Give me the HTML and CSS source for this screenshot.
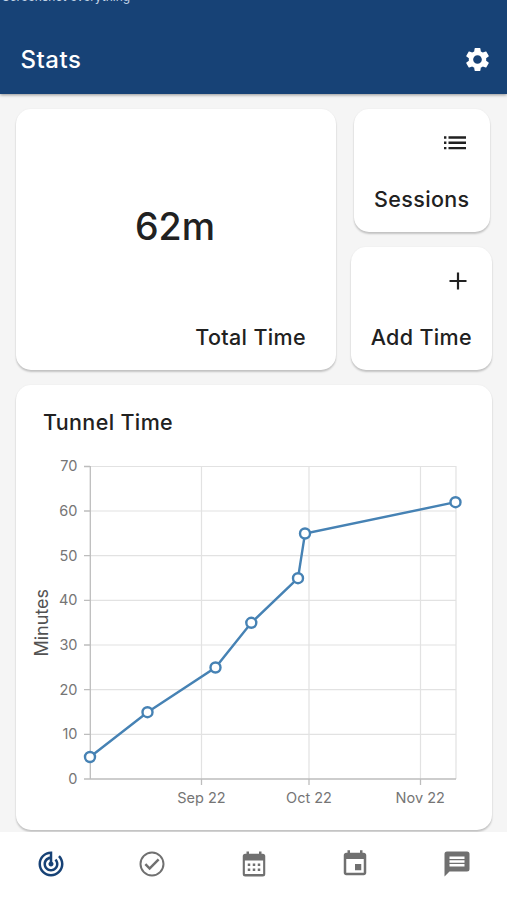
FILE: index.html
```html
<!DOCTYPE html>
<html lang="en">
<head>
<meta charset="utf-8">
<title>Stats</title>
<link rel="stylesheet" href="styles.css">
</head>
<body>
<div class="app">
  <header class="header">
    <div class="caption">Screenshot everything</div>
    <div class="toolbar">
      <h1 class="title">Stats</h1>
      <svg class="gear" viewBox="0 0 24 24"><path d="M19.14 12.94c.04-.3.06-.61.06-.94 0-.32-.02-.64-.07-.94l2.03-1.58c.18-.14.23-.41.12-.61l-1.92-3.32c-.12-.22-.37-.29-.59-.22l-2.39.96c-.5-.38-1.03-.7-1.62-.94l-.36-2.54c-.04-.24-.24-.41-.48-.41h-3.84c-.24 0-.43.17-.47.41l-.36 2.54c-.59.24-1.13.57-1.62.94l-2.39-.96c-.22-.08-.47 0-.59.22L2.74 8.87c-.12.21-.08.47.12.61l2.03 1.58c-.05.3-.09.63-.09.94s.02.64.07.94l-2.03 1.58c-.18.14-.23.41-.12.61l1.92 3.32c.12.22.37.29.59.22l2.39-.96c.5.38 1.03.7 1.62.94l.36 2.54c.05.24.24.41.48.41h3.84c.24 0 .44-.17.47-.41l.36-2.54c.59-.24 1.13-.56 1.62-.94l2.39.96c.22.08.47 0 .59-.22l1.92-3.32c.12-.22.07-.47-.12-.61l-2.01-1.58zM12 15.6c-1.98 0-3.6-1.62-3.6-3.6s1.62-3.6 3.6-3.6 3.6 1.62 3.6 3.6-1.62 3.6-3.6 3.6z"/></svg>
    </div>
  </header>
  <main class="content">
    <section class="summary">
      <div class="card total">
        <div class="value">62m</div>
        <div class="label">Total Time</div>
      </div>
      <div class="actions">
        <div class="card action sessions">
          <svg class="icon list" viewBox="0 0 24 24"><path d="M1 5.300h2.400v2.400H1zm0 5.300h2.400V13H1zm0 5.300h2.400v2.400H1zM5.500 5.300H23v2.400H5.500zm0 5.300H23V13H5.500zm0 5.300H23v2.400H5.500z"/></svg>
          <div class="label">Sessions</div>
        </div>
        <div class="card action add">
          <svg class="icon plus" viewBox="0 0 24 24"><path d="M10.900 3.500h2.200v7.400h7.400v2.200h-7.400v7.400h-2.200v-7.400H3.500v-2.200h7.400z"/></svg>
          <div class="label">Add Time</div>
        </div>
      </div>
    </section>
    <section class="card chart-card">
      <h2 class="chart-title">Tunnel Time</h2>
      <svg class="chart" viewBox="16 446 476 384">
        <path class="grid" d="M90 466.500H456M90 511H456M90 555.700H456M90 600.400H456M90 645H456M90 689.600H456M90 734.300H456M201.500 466V779M309 466V779M420.500 466V779M456 466V779"/>
        <path class="axis" d="M90.300 466V779M84 779H456M84 466.500H90M84 511H90M84 555.700H90M84 600.400H90M84 645H90M84 689.600H90M84 734.300H90M201.500 779V785M309 779V785M420.500 779V785"/>
        <g class="ylabels">
          <text x="77.500" y="471.300">70</text><text x="77.500" y="516">60</text><text x="77.500" y="560.600">50</text><text x="77.500" y="605.300">40</text><text x="77.500" y="650">30</text><text x="77.500" y="694.600">20</text><text x="77.500" y="739.300">10</text><text x="77.500" y="784">0</text>
        </g>
        <g class="xlabels">
          <text x="201.500" y="802.500">Sep 22</text><text x="309" y="802.500">Oct 22</text><text x="420.200" y="802.500">Nov 22</text>
        </g>
        <text class="ytitle" transform="translate(47.500 622.800) rotate(-90)">Minutes</text>
        <polyline class="line" points="90,757 147.500,712.200 215.500,667.500 251.300,622.800 298,578.200 305,533.500 455.500,502.200"/>
        <g class="dots">
          <circle cx="90" cy="757" r="5"/><circle cx="147.500" cy="712.200" r="5"/><circle cx="215.500" cy="667.500" r="5"/><circle cx="251.300" cy="622.800" r="5"/><circle cx="298" cy="578.200" r="5"/><circle cx="305" cy="533.500" r="5"/><circle cx="455.500" cy="502.200" r="5"/>
        </g>
      </svg>
    </section>
  </main>
  <nav class="tabs">
    <div class="tab active"><svg viewBox="0 0 24 24"><path d="M19.070 4.930l-1.410 1.410C19.100 7.790 20 9.790 20 12c0 4.420-3.580 8-8 8s-8-3.580-8-8c0-4.080 3.050-7.440 7-7.930v2.020C8.160 6.570 6 9.030 6 12c0 3.310 2.690 6 6 6s6-2.690 6-6c0-1.660-.67-3.160-1.760-4.240l-1.410 1.410C15.550 9.900 16 10.900 16 12c0 2.210-1.790 4-4 4s-4-1.790-4-4c0-1.860 1.280-3.410 3-3.860v2.140c-.6.350-1 .980-1 1.720 0 1.100.9 2 2 2s2-.9 2-2c0-.74-.4-1.380-1-1.720V2h-1C6.480 2 2 6.480 2 12s4.480 10 10 10 10-4.480 10-10c0-2.760-1.120-5.260-2.930-7.070z"/></svg></div>
    <div class="tab"><svg viewBox="0 0 24 24"><path d="M12 2C6.480 2 2 6.480 2 12s4.480 10 10 10 10-4.480 10-10S17.520 2 12 2zm0 18.400A8.400 8.400 0 1 1 12 3.600a8.400 8.400 0 0 1 0 16.800zM16.600 7.600L10.100 14.100 7.400 11.400 6 12.800l4.100 4.100 7.900-7.900z"/></svg></div>
    <div class="tab"><svg viewBox="0 0 24 24"><path fill-rule="evenodd" d="M5 3.700h1V2h2v1.700h8V2h2v1.700h1a2 2 0 0 1 2 2V20a2 2 0 0 1-2 2H5a2 2 0 0 1-2-2V5.700a2 2 0 0 1 2-2zM4.700 9.200V20h14.600V9.200zM7 11.500h2v2H7zm4 0h2v2h-2zm4 0h2v2h-2zM7 15.500h2v2H7zm4 0h2v2h-2zm4 0h2v2h-2z"/></svg></div>
    <div class="tab"><svg viewBox="0 0 24 24"><path d="M17 12h-5v5h5v-5zM16 1v2H8V1H6v2H5c-1.110 0-1.990.9-1.990 2L3 19c0 1.100.890 2 2 2h14c1.100 0 2-.9 2-2V5c0-1.100-.9-2-2-2h-1V1h-2zm3 18H5V8h14v11z"/></svg></div>
    <div class="tab"><svg viewBox="0 0 24 24"><path fill-rule="evenodd" d="M4 2h16a2 2 0 0 1 2 2v12a2 2 0 0 1-2 2H6l-4 4V4a2 2 0 0 1 2-2zm2 4v2h12V6zm0 3v2h12V9zM6 12v2h12v-2z"/></svg></div>
  </nav>
</div>
</body>
</html>
```
FILE: styles.css
```css
* { box-sizing: border-box; }
body { margin: 0; font-family: Inter, sans-serif; color: #212121; }
.app { height: 900px; display: flex; flex-direction: column; overflow: hidden; background: #f5f5f5; }
.header { height: 94px; flex: none; background: #174276; color: #fff; box-shadow: 0 1px 3px rgba(0,0,0,.4); overflow: hidden; }
.caption { height: 26px; margin-top: -11px; padding-left: 2px; font-size: 12px; line-height: 15px; white-space: nowrap; color: #c3d4e6; }
.toolbar { height: 68px; padding: 0 15px 0 20.500px; display: flex; align-items: center; justify-content: space-between; margin-top: 10px; }
.title { margin: 0; font-size: 24px; font-weight: 550; letter-spacing: .5px; }
.gear { width: 29px; height: 29px; fill: #fff; }
.content { flex: none; height: 738px; padding: 15px 15px 0 16px; overflow: hidden; }
.card { background: #fff; border-radius: 15px; box-shadow: 0 2px 2px rgba(0,0,0,.2), 0 0 2px rgba(0,0,0,.05); }
.summary { display: flex; gap: 15px; height: 261px; }
.total { width: 320px; display: flex; flex-direction: column; padding: 96px 30px 19px; }
.value { font-size: 37.500px; line-height: 44px; font-weight: 550; text-align: center; padding-right: 2px; }
.label { font-size: 21.500px; line-height: 27px; font-weight: 550; letter-spacing: .35px; white-space: nowrap; }
.total .label { margin-top: auto; text-align: right; }
.actions { width: 141px; display: flex; flex-direction: column; align-items: center; gap: 15px; }
.action { height: 123px; display: flex; flex-direction: column; justify-content: space-between; align-items: flex-end; padding: 22px 20px 19px; }
.sessions { width: 136px; }
.add { width: 141px; }
.icon { width: 24px; height: 24px; fill: #212121; }
.list { margin-right: 3px; }
.plus { margin-right: 2px; }
.chart-card { margin-top: 15px; height: 445px; overflow: hidden; }
.chart-title { margin: 0; height: 61px; padding: 23px 27px 0; font-size: 21.500px; line-height: 28px; font-weight: 550; letter-spacing: .35px; }
.chart { display: block; width: 476px; height: 384px; font-family: Inter, sans-serif; }
.grid { stroke: #e2e2e2; stroke-width: 1.2; fill: none; }
.axis { stroke: #bdbdbd; stroke-width: 1.3; fill: none; }
.ylabels text { text-anchor: end; font-size: 14.500px; fill: #757575; }
.xlabels text { text-anchor: middle; font-size: 14.500px; fill: #757575; }
.ytitle { text-anchor: middle; font-size: 18px; fill: #525252; }
.line { fill: none; stroke: #4682b4; stroke-width: 2.4; }
.dots circle { fill: #fff; stroke: #4682b4; stroke-width: 2.4; }
.tabs { height: 68px; flex: none; background: #fff; display: flex; }
.tab { flex: 1; display: flex; justify-content: center; padding: 17px 0 0 .5px; }
.tab svg { width: 30px; height: 30px; fill: #707070; }
.tab.active svg { fill: #174276; }
```
